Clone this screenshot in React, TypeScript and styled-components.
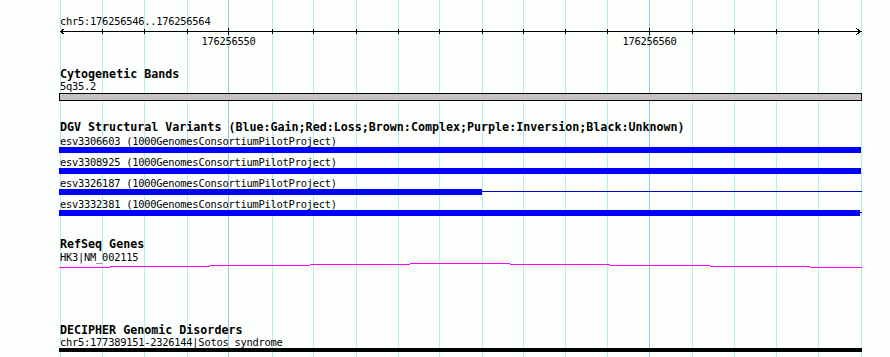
import React from 'react';
import styled, { createGlobalStyle } from 'styled-components';

const GRID_X = [60, 102, 144, 187, 228, 272, 313, 356, 398, 439, 482, 523, 565, 607, 649, 692, 734, 776, 818, 861];
const MAJOR = [
  { x: 228, label: '176256550' },
  { x: 649, label: '176256560' },
];
const TRACK_LEFT = 59;
const TRACK_WIDTH = 803;

const variants = [
  { name: 'esv3306603', end: 861 },
  { name: 'esv3308925', end: 861 },
  { name: 'esv3326187', end: 482, thinTo: 861 },
  { name: 'esv3332381', end: 860, thinTo: 861 },
];

// intron arc of the gene model, in steps of 100px
const arcY = [5, 4, 3, 2, 1, 2, 3, 4, 5];
const arcX = [59, 110, 210, 310, 410, 510, 610, 710, 810, 862];

const GlobalStyle = createGlobalStyle`
  html, body {
    margin: 0;
    padding: 0;
    background: #fdfffd;
  }
`;

const Canvas = styled.div`
  position: relative;
  width: 890px;
  height: 357px;
  overflow: hidden;
  background: #fdfffd;
  color: #000;
`;

const GridLayer = styled.svg`
  position: absolute;
  left: 0;
  top: 0;
  z-index: 0;
`;

const Tracks = styled.div`
  position: relative;
  z-index: 1;
  margin-left: ${TRACK_LEFT}px;
  width: ${TRACK_WIDTH}px;
  display: flex;
  flex-direction: column;
`;

const SmallText = styled.div<{ $top?: number }>`
  font-family: 'DejaVu Sans Mono', 'Liberation Mono', monospace;
  font-size: 10.4px;
  letter-spacing: -0.24px;
  line-height: 10px;
  height: 10px;
  padding-left: 1px;
  margin-top: ${(p) => p.$top ?? 0}px;
  white-space: pre;
`;

const Title = styled.div<{ $top: number }>`
  font-family: 'DejaVu Sans Mono', 'Liberation Mono', monospace;
  font-weight: bold;
  font-size: 11.67px;
  line-height: 11px;
  height: 11px;
  padding-left: 1px;
  margin-top: ${(p) => p.$top}px;
  white-space: pre;
`;

const RulerSvg = styled.svg`
  display: block;
`;

const TickRow = styled.div`
  position: relative;
  height: 10px;
`;

const TickLabel = styled.span`
  position: absolute;
  top: 0;
  transform: translateX(-50%);
  font-family: 'DejaVu Sans Mono', 'Liberation Mono', monospace;
  font-size: 10.4px;
  letter-spacing: -0.24px;
  line-height: 10px;
  white-space: pre;
`;

const Band = styled.div`
  margin-top: 2px;
  height: 6px;
  border: 1px solid #000;
  background: #c4c2c6;
`;

const BarLane = styled.div`
  position: relative;
  margin-top: 1px;
  height: 6px;
`;

const Bar = styled.div`
  height: 6px;
  background: #0000ff;
`;

const ThinLine = styled.div`
  position: absolute;
  right: 0;
  top: 2px;
  height: 1px;
  background: #0000c8;
`;

const Row = styled.div`
  display: flex;
  flex-direction: column;
  margin-top: 4px;
  &:first-of-type {
    margin-top: 3px;
  }
`;

const VariantList = styled.div`
  display: flex;
  flex-direction: column;
`;

const GeneSvg = styled.svg`
  display: block;
`;

const DisorderBar = styled.div`
  margin-top: 1px;
  height: 4px;
  background: #000;
`;

function Grid() {
  return (
    <GridLayer width={890} height={357} shapeRendering="crispEdges">
      {GRID_X.map((x) => (
        <rect
          key={x}
          x={x}
          y={0}
          width={1}
          height={357}
          fill={MAJOR.some((m) => m.x === x) ? '#92c8e6' : '#b4ecf0'}
        />
      ))}
    </GridLayer>
  );
}

function Ruler() {
  const l = (x: number) => x - TRACK_LEFT;
  return (
    <>
      <SmallText $top={16}>chr5:176256546..176256564</SmallText>
      <RulerSvg width={TRACK_WIDTH} height={10} shapeRendering="crispEdges">
        <rect x={1} y={5} width={802} height={1} fill="#000" />
        {GRID_X.slice(1, -1).map((x) => {
          const major = MAJOR.some((m) => m.x === x);
          return <rect key={x} x={l(x)} y={major ? 2 : 3} width={1} height={major ? 7 : 5} fill="#000" />;
        })}
        <path d="M5.5 2.5 L1.5 5.5 L5.5 8.5" fill="none" stroke="#000" strokeWidth={1} />
        <path d="M797.5 2.5 L801.5 5.5 L797.5 8.5" fill="none" stroke="#000" strokeWidth={1} />
      </RulerSvg>
      <TickRow>
        {MAJOR.map((m) => (
          <TickLabel key={m.x} style={{ left: l(m.x) + 0.5 }}>
            {m.label}
          </TickLabel>
        ))}
      </TickRow>
    </>
  );
}

function Variant({ name, end, thinTo }: { name: string; end: number; thinTo?: number }) {
  return (
    <Row>
      <SmallText>{name} (1000GenomesConsortiumPilotProject)</SmallText>
      <BarLane>
        <Bar style={{ width: end - TRACK_LEFT }} />
        {thinTo && <ThinLine style={{ width: thinTo - end + 1 }} />}
      </BarLane>
    </Row>
  );
}

function GeneModel() {
  const d = arcY
    .map((y, i) => `M${arcX[i] - TRACK_LEFT} ${y + 0.5} H${arcX[i + 1] - TRACK_LEFT}`)
    .join(' ');
  return (
    <GeneSvg width={TRACK_WIDTH} height={6} shapeRendering="crispEdges">
      <path d={d} stroke="#ff00ff" strokeWidth={1} fill="none" />
    </GeneSvg>
  );
}

export default function App() {
  return (
    <>
      <GlobalStyle />
      <Canvas>
        <Grid />
        <Tracks>
          <Ruler />

          <Title $top={23}>Cytogenetic Bands</Title>
          <SmallText $top={1}>5q35.2</SmallText>
          <Band />

          <Title $top={21}>
            DGV Structural Variants (Blue:Gain;Red:Loss;Brown:Complex;Purple:Inversion;Black:Unknown)
          </Title>
          <VariantList>
            {variants.map((v) => (
              <Variant key={v.name} {...v} />
            ))}
          </VariantList>

          <Title $top={23}>RefSeq Genes</Title>
          <SmallText $top={2}>HK3|NM_002115</SmallText>
          <GeneModel />

          <Title $top={57}>DECIPHER Genomic Disorders</Title>
          <SmallText $top={1}>chr5:177389151-2326144|Sotos syndrome</SmallText>
          <DisorderBar />
        </Tracks>
      </Canvas>
    </>
  );
}
